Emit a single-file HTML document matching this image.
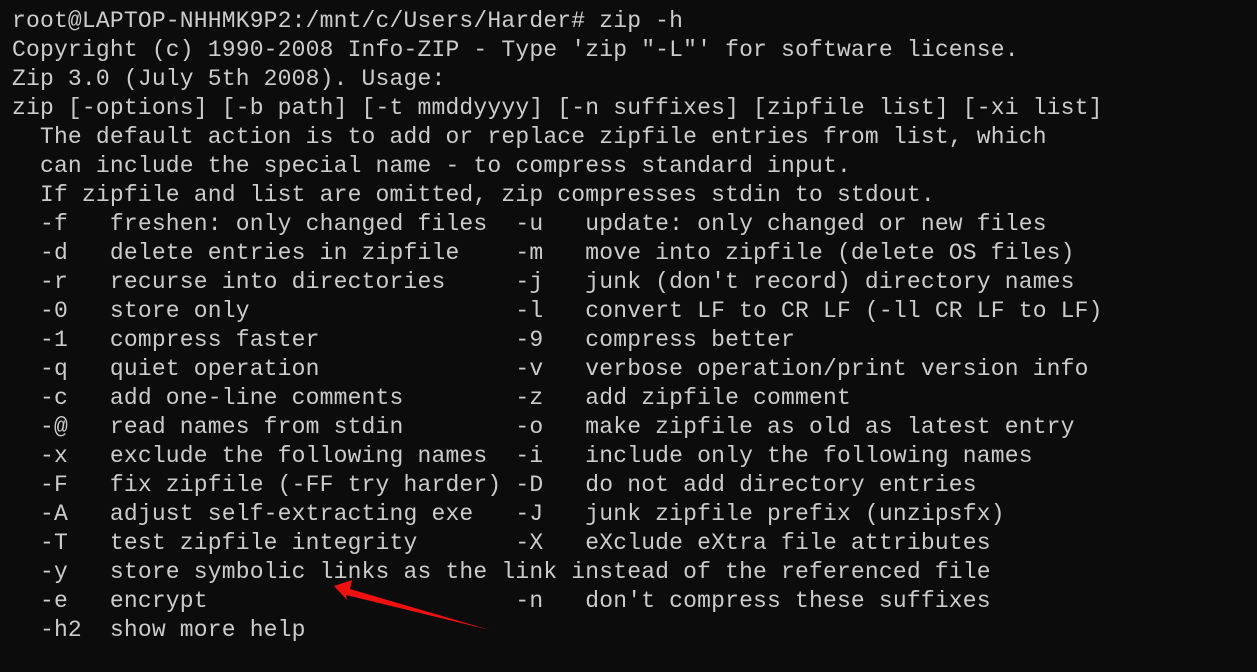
<!DOCTYPE html><html><head><style>
html,body{margin:0;background:#0c0c0c;width:1257px;height:672px;overflow:hidden}
pre{margin:0;position:absolute;left:12px;top:7px;font-family:"Liberation Mono",monospace;font-size:23px;line-height:29px;color:#cccccc;letter-spacing:0.18px}
</style></head><body>
<pre>root@LAPTOP-NHHMK9P2:/mnt/c/Users/Harder# zip -h
Copyright (c) 1990-2008 Info-ZIP - Type 'zip "-L"' for software license.
Zip 3.0 (July 5th 2008). Usage:
zip [-options] [-b path] [-t mmddyyyy] [-n suffixes] [zipfile list] [-xi list]
  The default action is to add or replace zipfile entries from list, which
  can include the special name - to compress standard input.
  If zipfile and list are omitted, zip compresses stdin to stdout.
  -f   freshen: only changed files  -u   update: only changed or new files
  -d   delete entries in zipfile    -m   move into zipfile (delete OS files)
  -r   recurse into directories     -j   junk (don't record) directory names
  -0   store only                   -l   convert LF to CR LF (-ll CR LF to LF)
  -1   compress faster              -9   compress better
  -q   quiet operation              -v   verbose operation/print version info
  -c   add one-line comments        -z   add zipfile comment
  -@   read names from stdin        -o   make zipfile as old as latest entry
  -x   exclude the following names  -i   include only the following names
  -F   fix zipfile (-FF try harder) -D   do not add directory entries
  -A   adjust self-extracting exe   -J   junk zipfile prefix (unzipsfx)
  -T   test zipfile integrity       -X   eXclude eXtra file attributes
  -y   store symbolic links as the link instead of the referenced file
  -e   encrypt                      -n   don't compress these suffixes
  -h2  show more help</pre>
<svg width="1257" height="672" style="position:absolute;left:0;top:0">
<polygon points="334,586 352,580 350,589 490,630 346,595 347,600" fill="#f01010"/>
</svg>
</body></html>
